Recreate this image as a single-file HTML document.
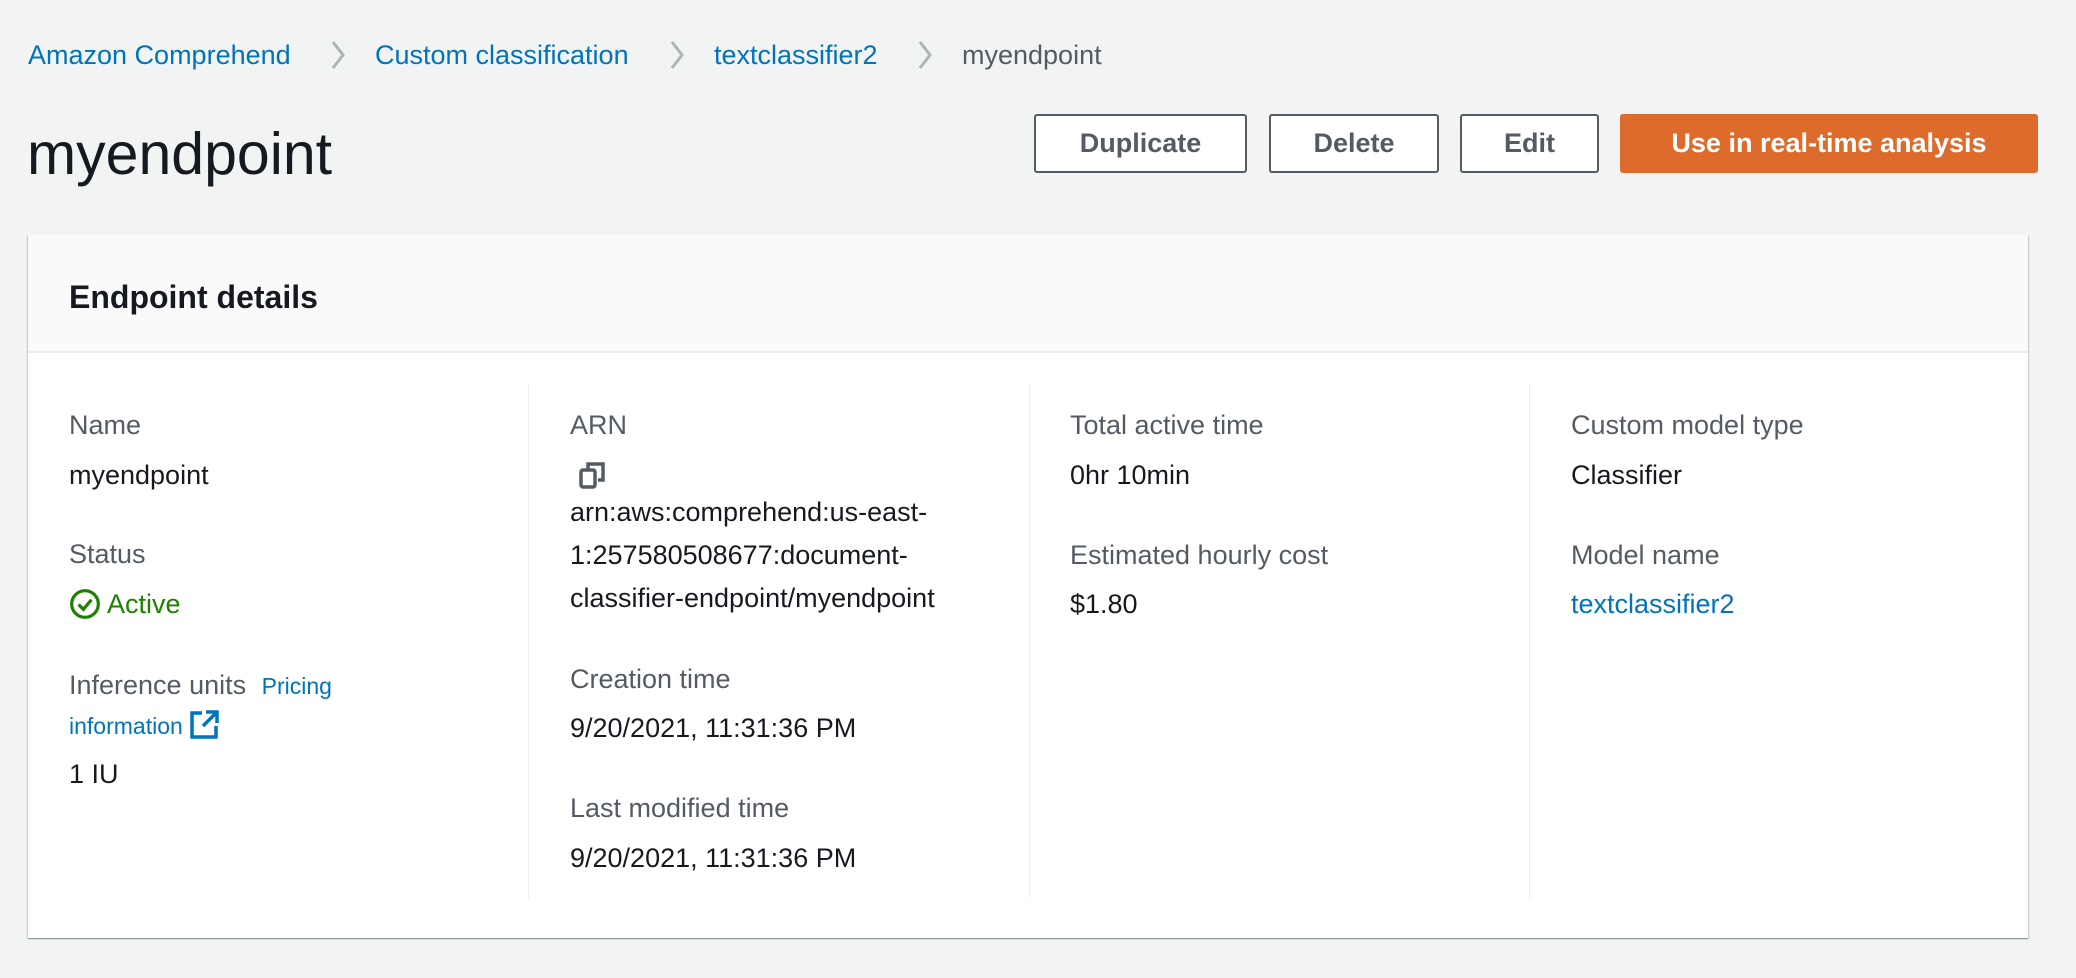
<!DOCTYPE html>
<html><head><meta charset="utf-8"><style>
*{margin:0;padding:0;box-sizing:border-box}
body{width:2076px;height:978px;background:#f2f3f3;font-family:"Liberation Sans",sans-serif;position:relative;overflow:hidden}
.a{position:absolute;white-space:nowrap}
.bc{font-size:27px;line-height:36px;top:37px;color:#0073bb}
.chev{top:40px}
.btn{position:absolute;top:114px;height:59px;border:2px solid #545b64;border-radius:3px;background:#fff;color:#545b64;font-weight:bold;font-size:27px;display:flex;align-items:center;justify-content:center}
.card{position:absolute;left:28px;top:235px;width:2000px;height:703px;background:#fff;box-shadow:0 1px 1px 0 rgba(0,28,36,.3),1px 1px 1px 0 rgba(0,28,36,.15),-1px 1px 1px 0 rgba(0,28,36,.15)}
.hd{position:absolute;left:0;top:0;width:100%;height:118px;background:#fafafa;border-bottom:2px solid #eaeded}
.l{font-size:27px;line-height:36px;color:#545b64}
.v{font-size:27px;line-height:36px;color:#16191f}
.lk{color:#0073bb}
.div{position:absolute;top:384px;width:1px;height:514px;background:#eaeded}
</style></head><body>
<div class="a bc" style="left:28px">Amazon Comprehend</div>
<svg class="a chev" style="left:329px" width="18" height="30" viewBox="0 0 18 30"><path d="M4 2l10 13-10 13" fill="none" stroke="#aab7b8" stroke-width="3"/></svg>
<div class="a bc" style="left:375px">Custom classification</div>
<svg class="a chev" style="left:668px" width="18" height="30" viewBox="0 0 18 30"><path d="M4 2l10 13-10 13" fill="none" stroke="#aab7b8" stroke-width="3"/></svg>
<div class="a bc" style="left:714px">textclassifier2</div>
<svg class="a chev" style="left:916px" width="18" height="30" viewBox="0 0 18 30"><path d="M4 2l10 13-10 13" fill="none" stroke="#aab7b8" stroke-width="3"/></svg>
<div class="a bc" style="left:962px;color:#545b64">myendpoint</div>
<div class="a" style="left:27px;top:118px;font-size:59px;line-height:72px;color:#16191f">myendpoint</div>
<div class="btn" style="left:1034px;width:213px">Duplicate</div>
<div class="btn" style="left:1269px;width:170px">Delete</div>
<div class="btn" style="left:1460px;width:139px">Edit</div>
<div class="btn" style="left:1620px;width:418px;background:#dd6b2c;border-color:#dd6b2c;color:#fff">Use in real-time analysis</div>
<div class="card"><div class="hd"></div>
<div class="a" style="left:41px;top:42px;font-size:32px;line-height:40px;font-weight:bold;color:#16191f">Endpoint details</div>
</div>
<div class="div" style="left:528px"></div>
<div class="div" style="left:1029px"></div>
<div class="div" style="left:1529px"></div>

<div class="a l" style="left:69px;top:407px">Name</div>
<div class="a v" style="left:69px;top:457px">myendpoint</div>
<div class="a l" style="left:69px;top:536px">Status</div>
<div class="a v" style="left:69px;top:586px;color:#1d8102">
<svg width="32" height="32" viewBox="0 0 30 30" style="vertical-align:-7px"><circle cx="15" cy="15" r="12.5" fill="none" stroke="#1d8102" stroke-width="3"/><path d="M9 15.5l4.5 4.5 7.5-9" fill="none" stroke="#1d8102" stroke-width="3"/></svg> Active</div>
<div class="a l" style="left:69px;top:667px">Inference units <span class="lk" style="font-size:23px;margin-left:8px">Pricing</span></div>
<div class="a lk" style="left:69px;top:709px;font-size:23px;line-height:32px">information <svg width="30" height="30" viewBox="0 0 30 30" style="vertical-align:-5px"><path d="M13 4H3v24h24V17" fill="none" stroke="#0073bb" stroke-width="3.5"/><path d="M17 3h11v11M27 4L14 17" fill="none" stroke="#0073bb" stroke-width="3.5"/></svg></div>
<div class="a v" style="left:69px;top:756px">1 IU</div>

<div class="a l" style="left:570px;top:407px">ARN</div>
<svg class="a" style="left:578px;top:461px" width="30" height="28" viewBox="0 0 30 28"><rect x="3" y="9" width="14" height="17" rx="2" fill="none" stroke="#545b64" stroke-width="3.5"/><path d="M10 8V3h15v16h-5" fill="none" stroke="#545b64" stroke-width="3.5"/></svg>
<div class="a v" style="left:570px;top:491px;line-height:43px">arn:aws:comprehend:us-east-<br>1:257580508677:document-<br>classifier-endpoint/myendpoint</div>
<div class="a l" style="left:570px;top:661px">Creation time</div>
<div class="a v" style="left:570px;top:710px">9/20/2021, 11:31:36 PM</div>
<div class="a l" style="left:570px;top:790px">Last modified time</div>
<div class="a v" style="left:570px;top:840px">9/20/2021, 11:31:36 PM</div>

<div class="a l" style="left:1070px;top:407px">Total active time</div>
<div class="a v" style="left:1070px;top:457px">0hr 10min</div>
<div class="a l" style="left:1070px;top:537px">Estimated hourly cost</div>
<div class="a v" style="left:1070px;top:586px">$1.80</div>

<div class="a l" style="left:1571px;top:407px">Custom model type</div>
<div class="a v" style="left:1571px;top:457px">Classifier</div>
<div class="a l" style="left:1571px;top:537px">Model name</div>
<div class="a v lk" style="left:1571px;top:586px">textclassifier2</div>
</body></html>
